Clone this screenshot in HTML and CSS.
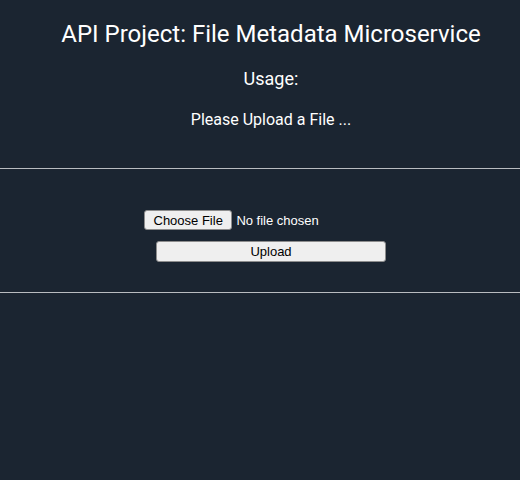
FILE: index.html
```html
<!DOCTYPE html>
<html lang="en">
<head>
<meta charset="utf-8">
<title>File Metadata Microservice</title>
<link rel="stylesheet" href="styles.css">
</head>
<body>
  <header class="intro">
    <h1 class="title">API Project: File Metadata Microservice</h1>
    <h2 class="usage">Usage:</h2>
    <p class="hint">Please Upload a File ...</p>
  </header>
  <hr class="rule">
  <form class="upload-form" action="#" method="post" enctype="multipart/form-data">
    <div class="file-row">
      <input class="file-input" type="file" name="upfile">
    </div>
    <input class="submit" type="submit" value="Upload">
  </form>
  <hr class="rule">
</body>
</html>
```
FILE: styles.css
```css
html, body {
  margin: 0;
  padding: 0;
}
body {
  background: #1b2531;
  color: #ffffff;
  font-family: Roboto, "Liberation Sans", Arial, sans-serif;
  width: 520px;
  min-height: 480px;
}
.intro {
  padding: 20px 0 0 22px;
  display: flex;
  flex-direction: column;
  align-items: center;
  text-align: center;
}
.title {
  margin: 0;
  font-size: 24px;
  font-weight: 400;
  line-height: 28px;
}
.usage {
  margin: 20px 0 0;
  font-size: 18px;
  font-weight: 400;
  line-height: 21px;
}
.hint {
  margin: 21px 0 0;
  font-size: 16px;
  font-weight: 400;
  line-height: 19px;
}
.rule {
  margin: 39px 0 0;
  border: 0;
  border-top: 1px solid #b9bcc0;
  height: 0;
}
.upload-form {
  padding: 41px 0 0 22px;
  display: flex;
  flex-direction: column;
  align-items: center;
}
.upload-form + .rule {
  margin-top: 30px;
}
.file-row {
  height: 22px;
  display: flex;
  justify-content: center;
}
.file-input {
  width: 254px;
  color: #ffffff;
  font-family: "Liberation Sans", Arial, sans-serif;
  font-size: 13px;
  margin: 0;
}
.file-input::file-selector-button {
  font-family: "Liberation Sans", Arial, sans-serif;
  font-size: 13px;
  color: #000000;
  background: #efefef;
  border: 1px solid #8d8d8d;
  border-radius: 3px;
  padding: 1px 8.5px;
  height: 20px;
  margin: 0 4px 0 0;
}
.submit {
  margin: 9px 0 0;
  width: 230px;
  height: 21px;
  font-family: "Liberation Sans", Arial, sans-serif;
  font-size: 13px;
  color: #000000;
  background: #efefef;
  border: 1px solid #8d8d8d;
  border-radius: 3px;
  padding: 0;
}
```
